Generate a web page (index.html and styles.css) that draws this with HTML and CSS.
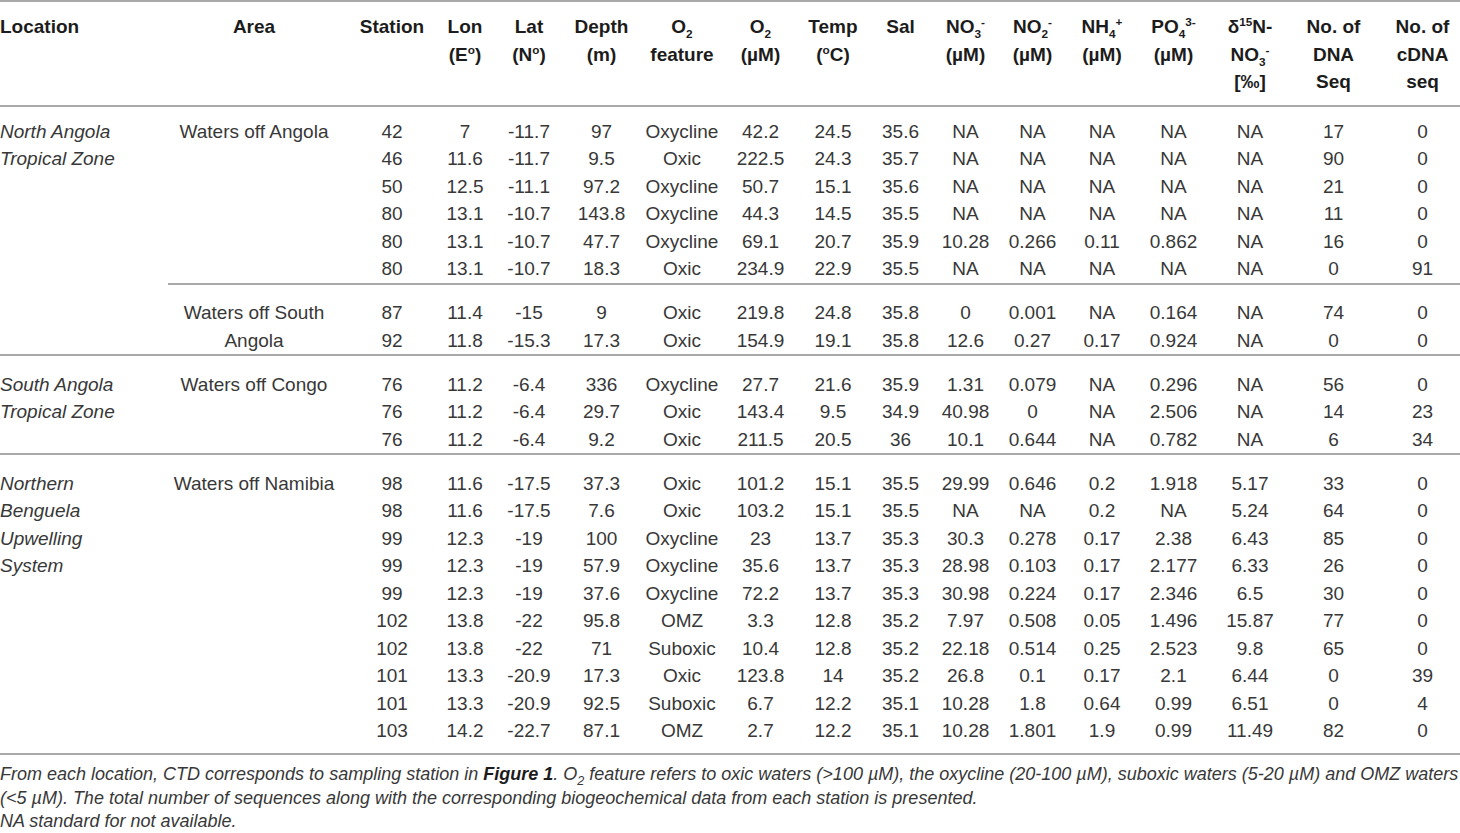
FILE: index.html
```html
<!DOCTYPE html>
<html>
<head>
<meta charset="utf-8">
<link rel="stylesheet" href="styles.css">
</head>
<body>
<table class="data">
<colgroup>
<col class="w-loc"><col class="w-area"><col class="w-st"><col class="w-lon"><col class="w-lat"><col class="w-dep"><col class="w-o2f"><col class="w-o2"><col class="w-temp"><col class="w-sal"><col class="w-no3"><col class="w-no2"><col class="w-nh4"><col class="w-po4"><col class="w-d15"><col class="w-dna"><col class="w-cdna">
</colgroup>
<thead>
<tr>
<th class="loc">Location</th>
<th>Area</th>
<th>Station</th>
<th>Lon<br>(E<sup>o</sup>)</th>
<th>Lat<br>(N<sup>o</sup>)</th>
<th>Depth<br>(m)</th>
<th>O<sub>2</sub><br>feature</th>
<th>O<sub>2</sub><br>(µM)</th>
<th>Temp<br>(<sup>o</sup>C)</th>
<th>Sal</th>
<th>NO<sub>3</sub><sup>-</sup><br>(µM)</th>
<th>NO<sub>2</sub><sup>-</sup><br>(µM)</th>
<th>NH<sub>4</sub><sup>+</sup><br>(µM)</th>
<th>PO<sub>4</sub><sup>3-</sup><br>(µM)</th>
<th>δ<sup>15</sup>N-<br>NO<sub>3</sub><sup>-</sup><br>[‰]</th>
<th>No. of<br>DNA<br>Seq</th>
<th>No. of<br>cDNA<br>seq</th>
</tr>
</thead>
<tbody>
<tr class="top">
<td class="loc sep" rowspan="8">North Angola Tropical Zone</td>
<td class="area sep" rowspan="6">Waters off Angola</td>
<td>42</td><td>7</td><td>-11.7</td><td>97</td><td>Oxycline</td><td>42.2</td><td>24.5</td><td>35.6</td><td>NA</td><td>NA</td><td>NA</td><td>NA</td><td>NA</td><td>17</td><td>0</td>
</tr>
<tr><td>46</td><td>11.6</td><td>-11.7</td><td>9.5</td><td>Oxic</td><td>222.5</td><td>24.3</td><td>35.7</td><td>NA</td><td>NA</td><td>NA</td><td>NA</td><td>NA</td><td>90</td><td>0</td></tr>
<tr><td>50</td><td>12.5</td><td>-11.1</td><td>97.2</td><td>Oxycline</td><td>50.7</td><td>15.1</td><td>35.6</td><td>NA</td><td>NA</td><td>NA</td><td>NA</td><td>NA</td><td>21</td><td>0</td></tr>
<tr><td>80</td><td>13.1</td><td>-10.7</td><td>143.8</td><td>Oxycline</td><td>44.3</td><td>14.5</td><td>35.5</td><td>NA</td><td>NA</td><td>NA</td><td>NA</td><td>NA</td><td>11</td><td>0</td></tr>
<tr><td>80</td><td>13.1</td><td>-10.7</td><td>47.7</td><td>Oxycline</td><td>69.1</td><td>20.7</td><td>35.9</td><td>10.28</td><td>0.266</td><td>0.11</td><td>0.862</td><td>NA</td><td>16</td><td>0</td></tr>
<tr class="end"><td>80</td><td>13.1</td><td>-10.7</td><td>18.3</td><td>Oxic</td><td>234.9</td><td>22.9</td><td>35.5</td><td>NA</td><td>NA</td><td>NA</td><td>NA</td><td>NA</td><td>0</td><td>91</td></tr>
<tr class="start">
<td class="area sep" rowspan="2">Waters off South<br>Angola</td>
<td>87</td><td>11.4</td><td>-15</td><td>9</td><td>Oxic</td><td>219.8</td><td>24.8</td><td>35.8</td><td>0</td><td>0.001</td><td>NA</td><td>0.164</td><td>NA</td><td>74</td><td>0</td>
</tr>
<tr class="end"><td>92</td><td>11.8</td><td>-15.3</td><td>17.3</td><td>Oxic</td><td>154.9</td><td>19.1</td><td>35.8</td><td>12.6</td><td>0.27</td><td>0.17</td><td>0.924</td><td>NA</td><td>0</td><td>0</td></tr>

<tr class="start">
<td class="loc sep" rowspan="3">South Angola<br>Tropical Zone</td>
<td class="area sep" rowspan="3">Waters off Congo</td>
<td>76</td><td>11.2</td><td>-6.4</td><td>336</td><td>Oxycline</td><td>27.7</td><td>21.6</td><td>35.9</td><td>1.31</td><td>0.079</td><td>NA</td><td>0.296</td><td>NA</td><td>56</td><td>0</td>
</tr>
<tr><td>76</td><td>11.2</td><td>-6.4</td><td>29.7</td><td>Oxic</td><td>143.4</td><td>9.5</td><td>34.9</td><td>40.98</td><td>0</td><td>NA</td><td>2.506</td><td>NA</td><td>14</td><td>23</td></tr>
<tr class="end"><td>76</td><td>11.2</td><td>-6.4</td><td>9.2</td><td>Oxic</td><td>211.5</td><td>20.5</td><td>36</td><td>10.1</td><td>0.644</td><td>NA</td><td>0.782</td><td>NA</td><td>6</td><td>34</td></tr>

<tr class="start">
<td class="loc sep last" rowspan="10">Northern<br>Benguela<br>Upwelling<br>System</td>
<td class="area sep last" rowspan="10">Waters off Namibia</td>
<td>98</td><td>11.6</td><td>-17.5</td><td>37.3</td><td>Oxic</td><td>101.2</td><td>15.1</td><td>35.5</td><td>29.99</td><td>0.646</td><td>0.2</td><td>1.918</td><td>5.17</td><td>33</td><td>0</td>
</tr>
<tr><td>98</td><td>11.6</td><td>-17.5</td><td>7.6</td><td>Oxic</td><td>103.2</td><td>15.1</td><td>35.5</td><td>NA</td><td>NA</td><td>0.2</td><td>NA</td><td>5.24</td><td>64</td><td>0</td></tr>
<tr><td>99</td><td>12.3</td><td>-19</td><td>100</td><td>Oxycline</td><td>23</td><td>13.7</td><td>35.3</td><td>30.3</td><td>0.278</td><td>0.17</td><td>2.38</td><td>6.43</td><td>85</td><td>0</td></tr>
<tr><td>99</td><td>12.3</td><td>-19</td><td>57.9</td><td>Oxycline</td><td>35.6</td><td>13.7</td><td>35.3</td><td>28.98</td><td>0.103</td><td>0.17</td><td>2.177</td><td>6.33</td><td>26</td><td>0</td></tr>
<tr><td>99</td><td>12.3</td><td>-19</td><td>37.6</td><td>Oxycline</td><td>72.2</td><td>13.7</td><td>35.3</td><td>30.98</td><td>0.224</td><td>0.17</td><td>2.346</td><td>6.5</td><td>30</td><td>0</td></tr>
<tr><td>102</td><td>13.8</td><td>-22</td><td>95.8</td><td>OMZ</td><td>3.3</td><td>12.8</td><td>35.2</td><td>7.97</td><td>0.508</td><td>0.05</td><td>1.496</td><td>15.87</td><td>77</td><td>0</td></tr>
<tr><td>102</td><td>13.8</td><td>-22</td><td>71</td><td>Suboxic</td><td>10.4</td><td>12.8</td><td>35.2</td><td>22.18</td><td>0.514</td><td>0.25</td><td>2.523</td><td>9.8</td><td>65</td><td>0</td></tr>
<tr><td>101</td><td>13.3</td><td>-20.9</td><td>17.3</td><td>Oxic</td><td>123.8</td><td>14</td><td>35.2</td><td>26.8</td><td>0.1</td><td>0.17</td><td>2.1</td><td>6.44</td><td>0</td><td>39</td></tr>
<tr><td>101</td><td>13.3</td><td>-20.9</td><td>92.5</td><td>Suboxic</td><td>6.7</td><td>12.2</td><td>35.1</td><td>10.28</td><td>1.8</td><td>0.64</td><td>0.99</td><td>6.51</td><td>0</td><td>4</td></tr>
<tr class="end final"><td>103</td><td>14.2</td><td>-22.7</td><td>87.1</td><td>OMZ</td><td>2.7</td><td>12.2</td><td>35.1</td><td>10.28</td><td>1.801</td><td>1.9</td><td>0.99</td><td>11.49</td><td>82</td><td>0</td></tr>
</tbody>
</table>
<div class="notes">
<p>From each location, CTD corresponds to sampling station in <b>Figure 1</b>. O<sub>2</sub> feature refers to oxic waters (&gt;100 µM), the oxycline (20-100 µM), suboxic waters (5-20 µM) and OMZ waters<br>(&lt;5 µM). The total number of sequences along with the corresponding biogeochemical data from each station is presented.</p>
<p>NA standard for not available.</p>
</div>
</body>
</html>
```

FILE: styles.css
```css
html, body {
  margin: 0;
  padding: 0;
  background: #fff;
}
body {
  font-family: "Liberation Sans", Arial, sans-serif;
  color: #383838;
  width: 1460px;
  overflow: hidden;
}
.data {
  width: 1460px;
  table-layout: fixed;
  border-collapse: collapse;
  font-size: 19px;
}
.w-loc { width: 168px; }
.w-area { width: 172px; }
.w-st { width: 88px; }
.w-lon { width: 68px; }
.w-lat { width: 66px; }
.w-dep { width: 79px; }
.w-o2f { width: 82px; }
.w-o2 { width: 75px; }
.w-temp { width: 70px; }
.w-sal { width: 65px; }
.w-no3 { width: 65px; }
.w-no2 { width: 69px; }
.w-nh4 { width: 70px; }
.w-po4 { width: 73px; }
.w-d15 { width: 80px; }
.w-dna { width: 87px; }
.w-cdna { width: 83px; }

.data th, .data td {
  padding: 0;
  line-height: 27.5px;
  text-align: center;
  white-space: nowrap;
}
.data th {
  font-weight: bold;
  color: #1c1c1c;
  vertical-align: top;
  border-top: 2px solid #a9a9a9;
  border-bottom: 2px solid #a9a9a9;
  padding-top: 11px;
  padding-bottom: 9px;
}
.data td {
  font-weight: normal;
  vertical-align: top;
}
.data .loc {
  text-align: left;
}
.data td.loc {
  font-style: italic;
  white-space: normal;
}
.data td.area {
  white-space: normal;
}
.data th:nth-last-child(15), .data td:nth-last-child(15) {
  padding-left: 16px;
}
.data th:nth-last-child(14), .data td:nth-last-child(14) {
  padding-left: 6px;
}
.data th:last-child, .data td:last-child {
  padding-left: 8px;
}
.data tr.top td {
  padding-top: 11px;
}
.data tr.start td {
  padding-top: 14.5px;
}
.data tr.end td, .data td.sep {
  border-bottom: 2px solid #a9a9a9;
}
.data tr.final td, .data td.last {
  padding-bottom: 8.5px;
}
.data sup, .data sub {
  font-size: 0.62em;
  line-height: 0;
}
.notes {
  margin-top: 8px;
  font-style: italic;
  font-size: 18px;
  line-height: 23.5px;
  color: #383838;
  white-space: nowrap;
}
.notes p {
  margin: 0;
}
.notes b {
  color: #1c1c1c;
}
.notes sub {
  font-size: 0.7em;
  line-height: 0;
}
```
